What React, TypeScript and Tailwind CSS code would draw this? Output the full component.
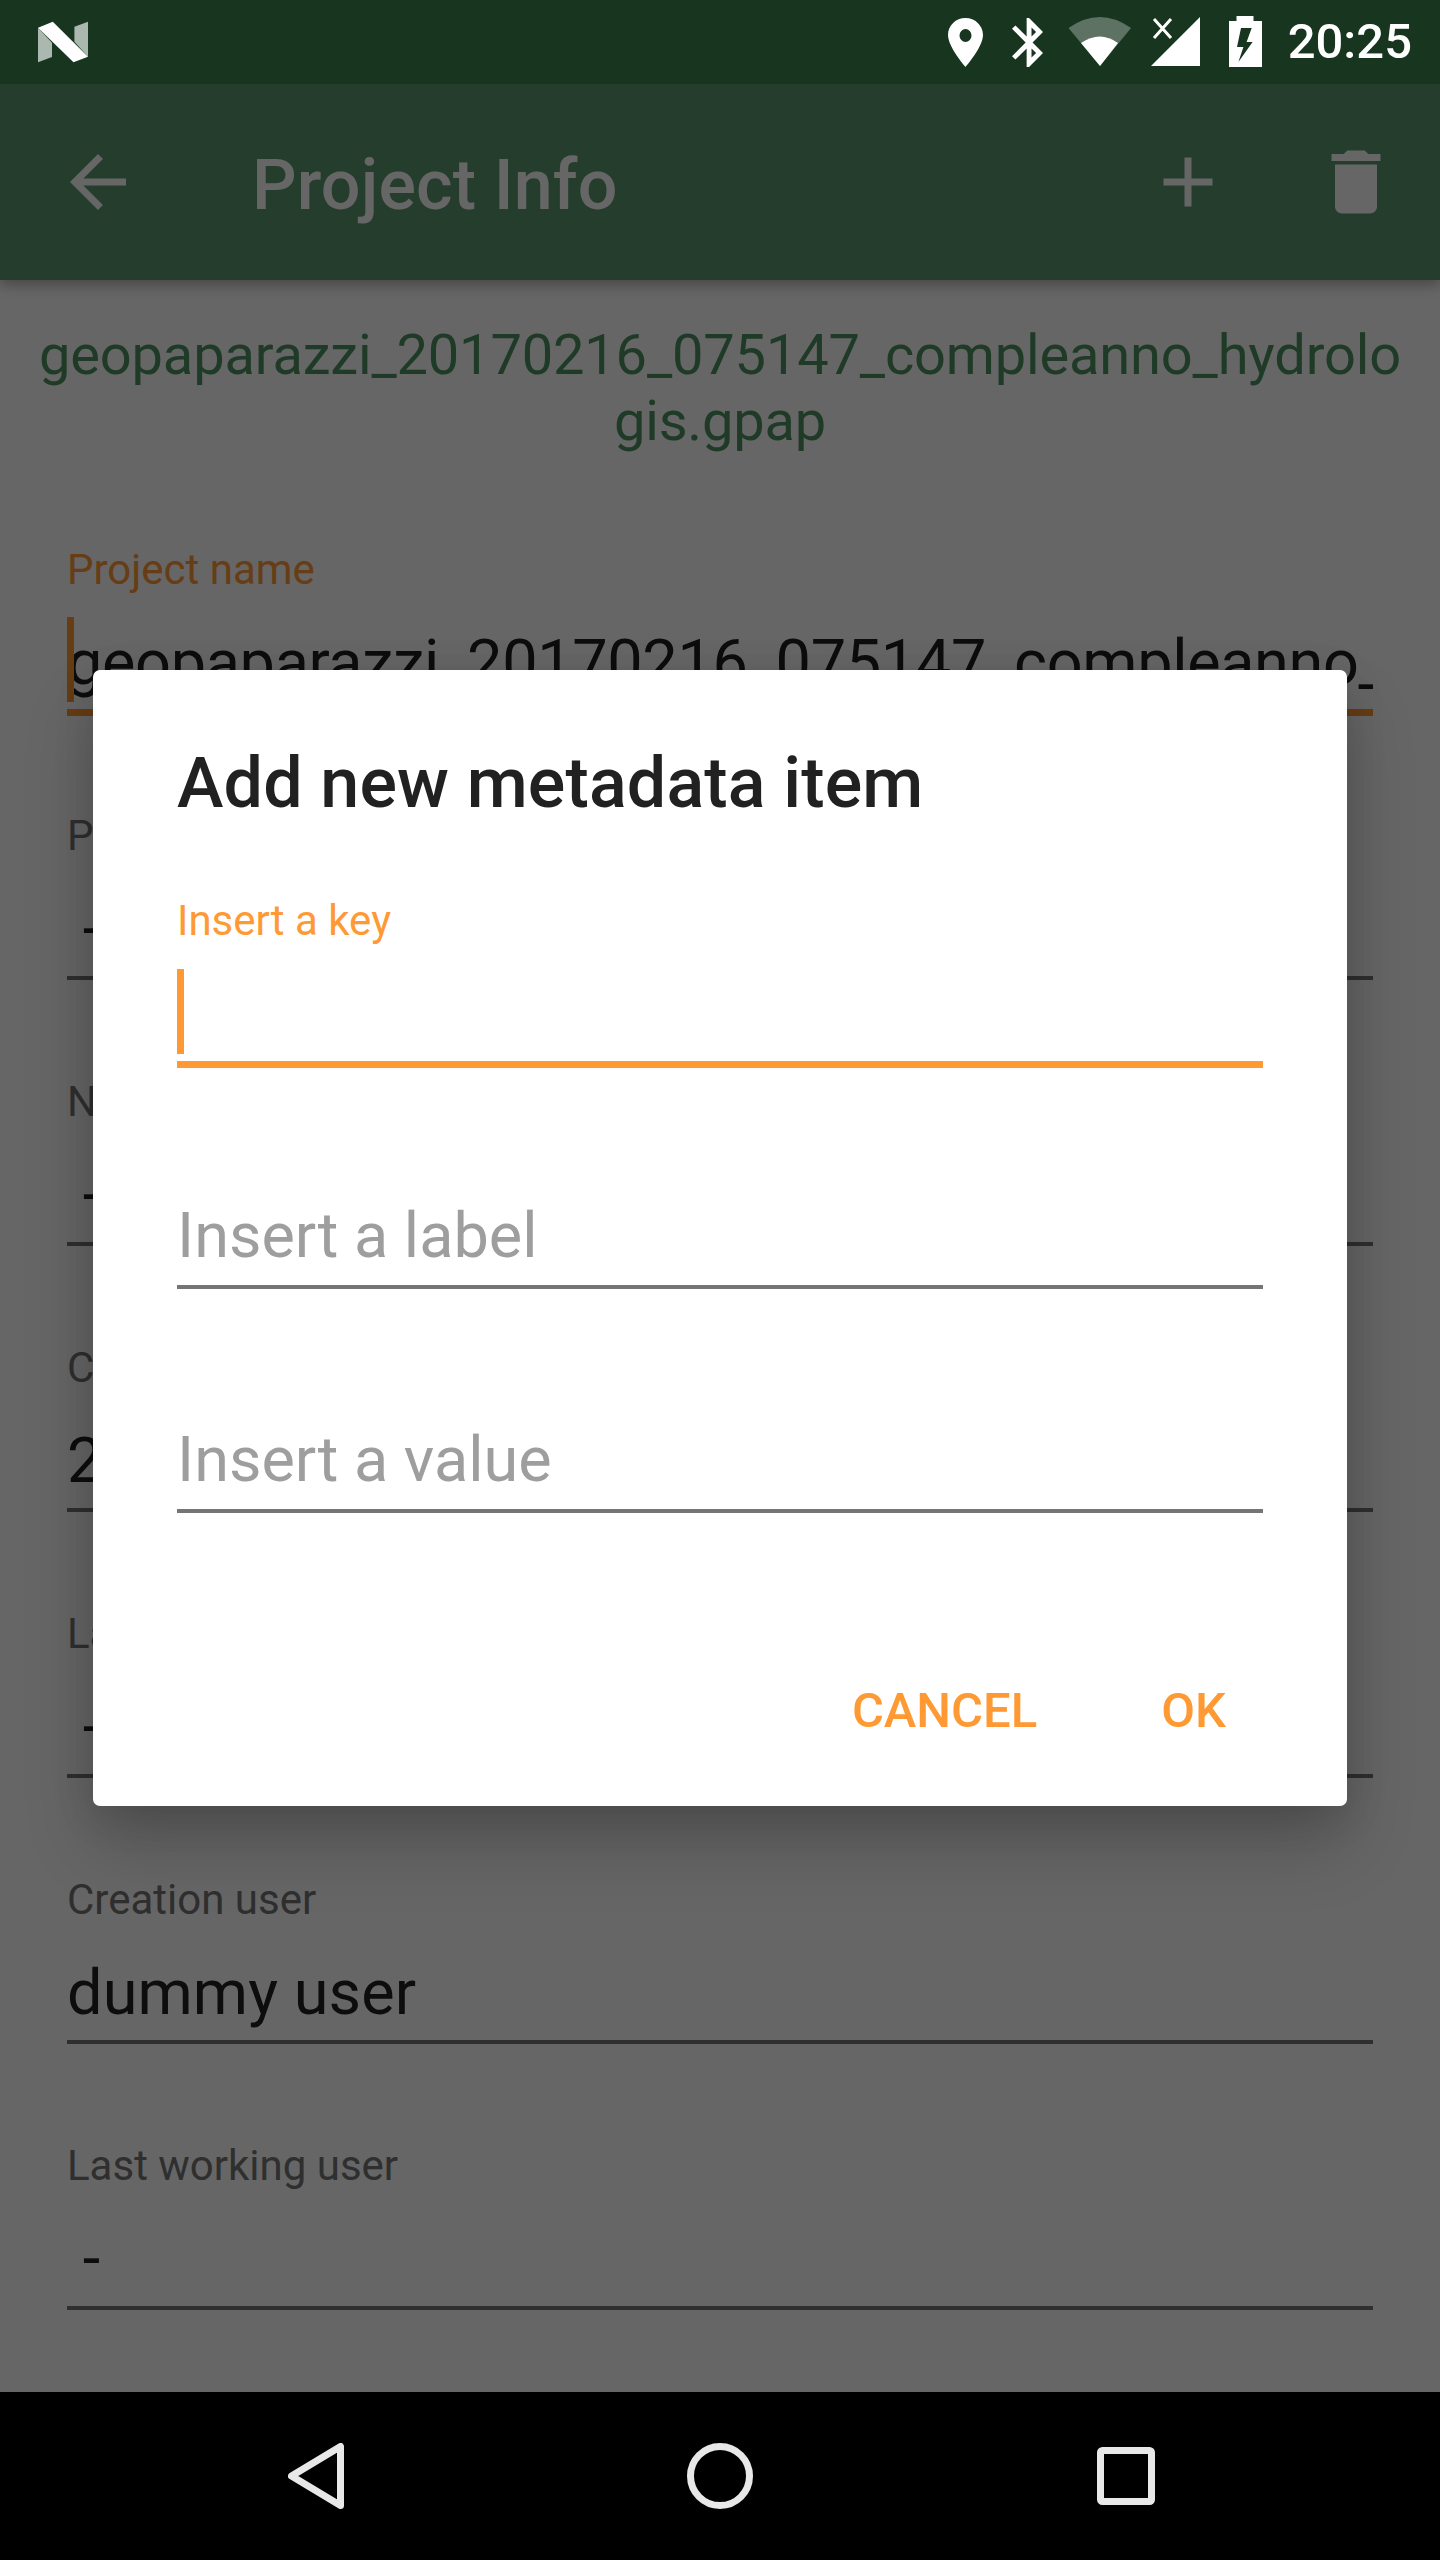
import React from "react";

const FONT = { fontFamily: "Roboto, sans-serif" };

function Logo() {
  return (
    <svg width="50" height="42" viewBox="0 0 50 42" className="ml-[38px] mt-[21px]">
      <path d="M0 6.7V41.3L14 36V21.7Z" fill="#aab8b0" />
      <path d="M50 0.7L36.4 5.7V20.7L50 35.7Z" fill="#aab8b0" />
      <path d="M14.8 0.7L0 6.7L35.5 41.3L50 35.7Z" fill="#fff" />
    </svg>
  );
}

function StatusIcons() {
  return (
    <div className="flex items-start h-full">
      <svg width="35" height="49" viewBox="0 0 35 49" className="mt-[18px]">
        <path fillRule="evenodd" fill="#fff" d="M17.5 0C7.8 0 0 7.5 0 17C0 29 17.5 49 17.5 49S35 29 35 17C35 7.5 27 0 17.5 0ZM17.5 11A6 6.5 0 1 1 17.5 24A6 6.5 0 1 1 17.5 11Z" />
      </svg>
      <svg width="31" height="49" viewBox="5 2 12.71 20" className="ml-[29px] mt-[18px]">
        <path fill="#fff" d="M17.71 7.71L12 2h-1v7.59L6.41 5 5 6.41 10.59 12 5 17.59 6.41 19 11 14.41V22h1l5.71-5.71-4.3-4.29 4.3-4.29zM13 5.83l1.88 1.88L13 9.59V5.83zm1.88 10.46L13 18.17v-3.76l1.88 1.88z" />
      </svg>
      <svg width="64" height="50" viewBox="0 0 64 50" className="ml-[25px] mt-[17px]">
        <path d="M0.5 11Q32 -11 63 11L32 49Z" fill="#fff" fillOpacity="0.3" />
        <path d="M13 26Q32 13 50 26L32 49Z" fill="#fff" />
      </svg>
      <svg width="49" height="49" viewBox="0 0 49 49" className="ml-[19px] mt-[17px]">
        <path d="M49 0V49H0Z" fill="#fff" />
        <path d="M3 2L20 21M20 2L3 21" stroke="#fff" strokeWidth="3" fill="none" />
      </svg>
      <svg width="33" height="51" viewBox="0 0 33 51" className="ml-[29px] mt-[16px]">
        <path d="M7.5 0H24.5V5H33V51H0V5H7.5Z" fill="#fff" />
        <path d="M22.7 12H12L8 31H14.4L9.4 46L23.6 26H17.6Z" fill="#17351f" />
      </svg>
      <span className="ml-[26px] mr-[28px] text-[49px] leading-[84px] font-medium text-white">20:25</span>
    </div>
  );
}

function Field({ label, value, focused }: { label: string; value: string; focused?: boolean }) {
  return (
    <div className="h-[266px] flex flex-col">
      <div className={`mt-[93px] h-[50px] leading-[50px] text-[42px] ${focused ? "text-[#ff9933]" : "text-[#757575]"}`}>{label}</div>
      <div className={`relative mt-[31px] h-[74px] leading-[74px] text-[63px] text-[#212121] whitespace-nowrap overflow-hidden ${focused ? "tracking-[-0.35px]" : "tracking-[0.1px]"}`}>
        {value}
      </div>
      {focused ? (
        <div className="relative mt-[9px] h-[7px] bg-[#ff9933]">
          <div className="absolute left-0 bottom-[14px] h-[85px] w-[7px] bg-[#ff9933]" />
        </div>
      ) : (
        <div className="mt-[10px] h-[4px] bg-[#757575]" />
      )}
    </div>
  );
}

function DialogInput({ placeholder }: { placeholder: string }) {
  return (
    <div>
      <div className="h-[74px] leading-[74px] text-[63px] text-[#9e9e9e]">{placeholder}</div>
      <div className="mt-[12px] h-[4px] bg-[#757575]" />
    </div>
  );
}

export default function App() {
  return (
    <div className="w-[1440px] h-[2560px] flex flex-col overflow-hidden bg-white" style={FONT}>
      <div className="h-[84px] shrink-0 bg-[#17351f] flex justify-between">
        <Logo />
        <StatusIcons />
      </div>

      <div className="relative flex-1 min-h-0 overflow-hidden bg-white">
        <div className="h-[196px] bg-[#5b9a70] flex items-center shadow-[0_4px_14px_rgba(0,0,0,0.35)] relative">
          <svg width="84" height="84" viewBox="0 0 24 24" className="ml-[56px]">
            <path fill="#fff" d="M20 11H7.83l5.59-5.59L12 4l-8 8 8 8 1.41-1.41L7.83 13H20v-2z" />
          </svg>
          <span className="ml-[112px] mt-[6px] text-[70px] tracking-[0.15px] font-medium text-white">Project Info</span>
          <div className="ml-auto flex mr-[42px] gap-[84px]">
            <svg width="84" height="84" viewBox="0 0 24 24">
              <path fill="#fff" d="M19 13h-6v6h-2v-6H5v-2h6V5h2v6h6v2z" />
            </svg>
            <svg width="84" height="84" viewBox="0 0 24 24">
              <path fill="#fff" d="M6 19c0 1.1.9 2 2 2h8c1.1 0 2-.9 2-2V7H6v12zM19 4h-3.5l-1-1h-5l-1 1H5v2h14V4z" />
            </svg>
          </div>
        </div>

        <div className="mt-[43px] px-[32px] text-center text-[56px] leading-[65.6px] tracking-[-0.17px] text-[#4f9465] break-all">
          geopaparazzi_20170216_075147_compleanno_hydrologis.gpap
        </div>

        <div className="mt-[-2px] px-[67px]">
          <Field label="Project name" value="geopaparazzi_20170216_075147_compleanno_hydrologis" focused />
          <Field label="Project description" value={"\u00a0-"} />
          <Field label="Notes" value={"\u00a0-"} />
          <Field label="Creation date" value="2017-02-16 07:51:47" />
          <Field label="Last change date" value={"\u00a0-"} />
          <Field label="Creation user" value="dummy user" />
          <Field label="Last working user" value={"\u00a0-"} />
        </div>

        <div className="absolute inset-0 bg-black/60" />

        <div className="absolute left-[93px] top-[586px] w-[1254px] h-[1136px] bg-white rounded-[7px] shadow-[0_38px_70px_rgba(0,0,0,0.2),0_10px_40px_rgba(0,0,0,0.12)] px-[84px] flex flex-col">
          <div className="mt-[72px] h-[82px] leading-[82px] text-[70px] tracking-[0.15px] font-medium text-[#212121]">Add new metadata item</div>
          <div className="mt-[72px] h-[50px] leading-[50px] text-[42px] text-[#ff9933]">Insert a key</div>
          <div className="mt-[23px] h-[85px] w-[7px] bg-[#ff9933]" />
          <div className="mt-[7px] h-[7px] bg-[#ff9933]" />
          <div className="mt-[131px]">
            <DialogInput placeholder="Insert a label" />
          </div>
          <div className="mt-[134px]">
            <DialogInput placeholder="Insert a value" />
          </div>
          <div className="mt-auto mb-[66px] flex justify-end text-[49px] leading-[58px] font-medium text-[#ff9933]">
            <span>CANCEL</span>
            <span className="ml-[124px] mr-[37px]">OK</span>
          </div>
        </div>
      </div>

      <div className="h-[168px] shrink-0 bg-black flex items-center justify-center relative">
        <div className="w-[1440px] flex items-center h-full">
          <svg width="56" height="66" viewBox="0 0 56 66" className="ml-[288px]">
            <path d="M52.5 3.5V62.5L3.5 33Z" fill="none" stroke="#e8e8e8" strokeWidth="7" strokeLinejoin="round" />
          </svg>
          <svg width="66" height="66" viewBox="0 0 66 66" className="ml-[343px]">
            <circle cx="33" cy="33" r="29.5" fill="none" stroke="#e8e8e8" strokeWidth="7" />
          </svg>
          <svg width="58" height="58" viewBox="0 0 58 58" className="ml-[344px]">
            <rect x="3.5" y="3.5" width="51" height="51" rx="2" fill="none" stroke="#e8e8e8" strokeWidth="7" />
          </svg>
        </div>
      </div>
    </div>
  );
}
